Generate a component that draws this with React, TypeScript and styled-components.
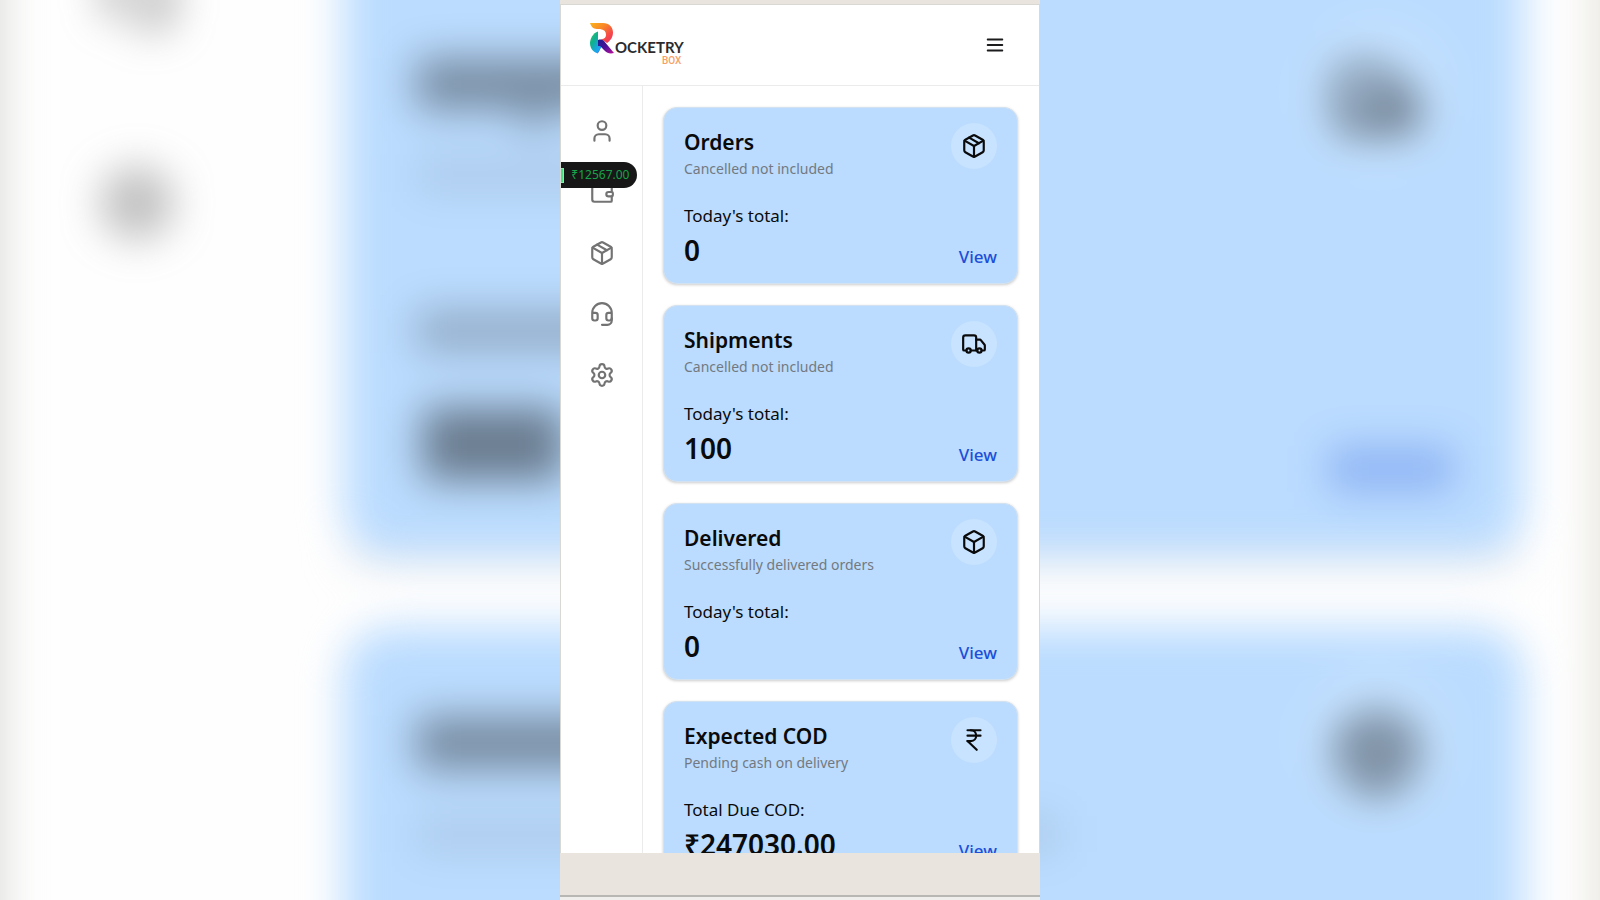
import React from "react";
import styled, { createGlobalStyle } from "styled-components";
import { Box, Headset, IndianRupee, Package, Settings, Truck, User, Wallet } from "lucide-react";
import type { LucideIcon } from "lucide-react";

const GlobalStyle = createGlobalStyle`
  *, *::before, *::after { box-sizing: border-box; }
  body {
    margin: 0;
    background: #ffffff;
    color: #0a0a0a;
    font-family: "Noto Sans", "Open Sans", sans-serif;
  }
`;

const Stage = styled.div`
  position: relative;
  display: flex;
  justify-content: center;
  height: 100vh;
  overflow: hidden;
`;

const BackdropArt = styled.svg`
  position: absolute;
  inset: 0;
  width: 100%;
  height: 100%;
`;

const Device = styled.div`
  position: relative;
  display: flex;
  flex-direction: column;
  width: 30%;
  min-width: min(480px, 100%);
  background: #e9e4de;
  padding-top: 4px;
`;

const Screen = styled.div`
  flex: 1;
  min-height: 0;
  display: flex;
  flex-direction: column;
  overflow: hidden;
  background: #ffffff;
  border: 1px solid #dad8d3;
  border-bottom: 0;
`;

const Shelf = styled.div`
  height: 47px;
  flex: none;
  display: flex;
  flex-direction: column;
  justify-content: flex-end;
`;

const ShelfEdge = styled.div`
  height: 5px;
  background: #efeeed;
  border-top: 2px solid #b9b7b4;
`;

const Header = styled.header`
  flex: none;
  height: 81px;
  display: flex;
  align-items: center;
  justify-content: space-between;
  padding: 0 33px 0 28px;
  border-bottom: 1px solid #ebebeb;
`;

const HomeLink = styled.a`
  display: block;
  line-height: 0;
`;

const MenuButton = styled.button`
  display: flex;
  padding: 0;
  border: 0;
  background: none;
  color: #1c1c1f;
`;

const Body = styled.div`
  flex: 1;
  min-height: 0;
  display: flex;
`;

const Sidebar = styled.nav`
  flex: none;
  width: 82px;
  border-right: 1px solid #ebebeb;
  display: flex;
  flex-direction: column;
  align-items: center;
  gap: 35px;
  padding-top: 32px;
`;

const NavLink = styled.a`
  position: relative;
  display: flex;
  color: #737373;
`;

const Balance = styled.span`
  position: absolute;
  right: -22px;
  bottom: 17px;
  display: flex;
  align-items: center;
  justify-content: flex-end;
  gap: 7px;
  width: 108px;
  height: 26px;
  padding: 0 7px;
  border-radius: 13px;
  background: #171717;
  color: #16a34a;
  font-size: 12px;
  line-height: 16px;
`;

const Banknote = styled.span`
  width: 20px;
  height: 15px;
  flex: none;
  background: #4ade80;
  border: 1px solid #86efac;
`;

const Main = styled.main`
  flex: 1;
  min-width: 0;
  display: flex;
  flex-direction: column;
  gap: 21px;
  padding: 21px 21px 21px 20px;
  overflow: hidden;
`;

const CardBox = styled.article`
  flex: none;
  height: 177px;
  display: flex;
  flex-direction: column;
  justify-content: space-between;
  padding: 15px 20px 13px;
  border-radius: 14px;
  background: #bbdcff;
  border: 1px solid #d3e2f0;
  box-shadow: 0 1px 3px rgba(0, 0, 0, 0.2);
`;

const CardTop = styled.div`
  display: flex;
  justify-content: space-between;
`;

const CardTitle = styled.h2`
  margin: 4px 0 0;
  font-size: 21px;
  line-height: 30px;
  font-weight: 600;
`;

const CardNote = styled.p`
  margin: 0;
  font-size: 14px;
  line-height: 24px;
  color: #737980;
`;

const IconDisc = styled.span`
  display: flex;
  align-items: center;
  justify-content: center;
  width: 46px;
  height: 46px;
  border-radius: 50%;
  background: rgba(255, 255, 255, 0.2);
`;

const CardBottom = styled.div`
  display: flex;
  justify-content: space-between;
  align-items: flex-end;
`;

const Label = styled.div`
  font-size: 17px;
  line-height: 28px;
`;

const Value = styled.div`
  font-size: 28px;
  line-height: 40px;
  font-weight: 600;
`;

const ViewLink = styled.a`
  color: #1d4ed8;
  font-size: 17px;
  line-height: 26px;
  font-weight: 500;
  text-decoration: none;
`;

function Backdrop() {
  return (
    <BackdropArt viewBox="0 0 1600 900" preserveAspectRatio="xMidYMid slice" aria-hidden="true">
      <defs>
        <filter id="haze" filterUnits="userSpaceOnUse" x="-100" y="-100" width="1800" height="1100" colorInterpolationFilters="sRGB">
          <feGaussianBlur stdDeviation="20" />
        </filter>
      </defs>
      <rect width="1600" height="900" fill="#fefefe" />
      <g filter="url(#haze)">
        <rect x="-90" y="-90" width="92" height="1080" fill="#dadad6" />
        <rect x="1594" y="-90" width="96" height="1080" fill="#e6e4dc" />
        <rect x="343" y="-300" width="1181" height="857" rx="48" fill="#bbdcff" />
        <rect x="343" y="553" width="1181" height="12" fill="#cfd4da" opacity="0.5" />
        <rect x="343" y="627" width="1181" height="600" rx="48" fill="#bbdcff" />
        <g fill="#0a0a0a">
          <rect x="416" y="58" width="363" height="52" opacity="0.38" />
          <rect x="520" y="105" width="30" height="26" opacity="0.25" />
          <rect x="416" y="155" width="480" height="38" opacity="0.08" />
          <rect x="416" y="309" width="340" height="44" opacity="0.22" />
          <rect x="422" y="407" width="142" height="74" opacity="0.46" />
          <rect x="416" y="716" width="330" height="54" opacity="0.38" />
          <rect x="416" y="815" width="645" height="38" opacity="0.08" />
        </g>
        <rect x="1328" y="446" width="126" height="46" fill="#1d4ed8" opacity="0.28" />
        <g fill="#ffffff" opacity="0.14">
          <circle cx="1378" cy="93" r="75" />
          <circle cx="1378" cy="740" r="75" />
        </g>
        <g opacity="0.55">
          <Truck x={1334} y={58} width={86} height={86} color="#0a0a0a" strokeWidth={4} />
          <Box x={1334} y={710} width={86} height={86} color="#0a0a0a" strokeWidth={4} />
        </g>
        <Headset x={98} y={-48} width={80} height={80} color="#737373" strokeWidth={2} />
        <Settings x={97} y={163} width={80} height={80} color="#737373" strokeWidth={2} />
      </g>
    </BackdropArt>
  );
}

function Logo() {
  return (
    <svg width="98" height="46" viewBox="0 0 98 46" role="img" aria-label="Rocketry Box">
      <defs>
        <linearGradient id="arc" x1="0" y1="0" x2="1" y2="1">
          <stop offset="0" stopColor="#fbb51c" />
          <stop offset="0.4" stopColor="#f98329" />
          <stop offset="0.7" stopColor="#f54a4a" />
          <stop offset="1" stopColor="#ee2f62" />
        </linearGradient>
        <linearGradient id="leaf" x1="0" y1="0" x2="0.6" y2="1">
          <stop offset="0" stopColor="#35c46a" />
          <stop offset="0.5" stopColor="#0fb08c" />
          <stop offset="1" stopColor="#1ba5ee" />
        </linearGradient>
        <linearGradient id="leg" x1="0" y1="0" x2="1" y2="1">
          <stop offset="0" stopColor="#1c1f8f" />
          <stop offset="0.5" stopColor="#4a1098" />
          <stop offset="1" stopColor="#c3129c" />
        </linearGradient>
      </defs>
      <path d="M1 1h13c6 0 10 4 10 9.500c0 5-3 8.500-6 10.500l-6-4c4 0 5-2 5-4.500c0-3-2-5-6-5.500H8C4 7 2 4 1 1z" fill="url(#arc)" />
      <path d="M9 9.500v22C3 30 1 25 1 21s3-10 8-11.500z" fill="url(#leaf)" />
      <path d="M9 31V18c3-1 5 0 6 1l10 12c-4 1-7 0-9-2l-4-4c-1 2-2 4-3 6z" fill="url(#leg)" />
      <path d="M9 24c2 0 3 0 3 1c-1 3-2 5-4 6z" fill="#1ba5ee" />
      <text x="26" y="31" fontFamily="Lato, sans-serif" fontSize="15" fontWeight="700" fill="#2b2b2e">OCKETRY</text>
      <text x="73" y="42" fontFamily="Roboto, sans-serif" fontSize="10" fontWeight="500" fill="#f9a066">BOX</text>
    </svg>
  );
}

interface Summary {
  title: string;
  note: string;
  label: string;
  value: string;
  icon: LucideIcon;
}

const summaries: Summary[] = [
  { title: "Orders", note: "Cancelled not included", label: "Today's total:", value: "0", icon: Package },
  { title: "Shipments", note: "Cancelled not included", label: "Today's total:", value: "100", icon: Truck },
  { title: "Delivered", note: "Successfully delivered orders", label: "Today's total:", value: "0", icon: Box },
  { title: "Expected COD", note: "Pending cash on delivery", label: "Total Due COD:", value: "₹247030.00", icon: IndianRupee },
];

function SummaryCard({ title, note, label, value, icon: Icon }: Summary) {
  return (
    <CardBox>
      <CardTop>
        <div>
          <CardTitle>{title}</CardTitle>
          <CardNote>{note}</CardNote>
        </div>
        <IconDisc>
          <Icon size={26} strokeWidth={2} />
        </IconDisc>
      </CardTop>
      <CardBottom>
        <div>
          <Label>{label}</Label>
          <Value>{value}</Value>
        </div>
        <ViewLink href="#">View</ViewLink>
      </CardBottom>
    </CardBox>
  );
}

const navItems: { name: string; icon: LucideIcon; balance?: string }[] = [
  { name: "Profile", icon: User },
  { name: "Wallet", icon: Wallet, balance: "₹12567.00" },
  { name: "Orders", icon: Package },
  { name: "Support", icon: Headset },
  { name: "Settings", icon: Settings },
];

export default function App() {
  return (
    <Stage>
      <GlobalStyle />
      <Backdrop />
      <Device>
        <Screen>
          <Header>
            <HomeLink href="#">
              <Logo />
            </HomeLink>
            <MenuButton type="button" aria-label="Open menu">
              <svg width="22" height="22" viewBox="0 0 24 24" fill="none" stroke="currentColor" strokeWidth="2" strokeLinecap="round">
                <path d="M4 6h16M4 12h16M4 18h16" />
              </svg>
            </MenuButton>
          </Header>
          <Body>
            <Sidebar aria-label="Main">
              {navItems.map(({ name, icon: Icon, balance }) => (
                <NavLink key={name} href="#" aria-label={name}>
                  <Icon size={26} strokeWidth={2} />
                  {balance && (
                    <Balance>
                      <Banknote />
                      {balance}
                    </Balance>
                  )}
                </NavLink>
              ))}
            </Sidebar>
            <Main>
              {summaries.map((s) => (
                <SummaryCard key={s.title} {...s} />
              ))}
            </Main>
          </Body>
        </Screen>
        <Shelf>
          <ShelfEdge />
        </Shelf>
      </Device>
    </Stage>
  );
}
